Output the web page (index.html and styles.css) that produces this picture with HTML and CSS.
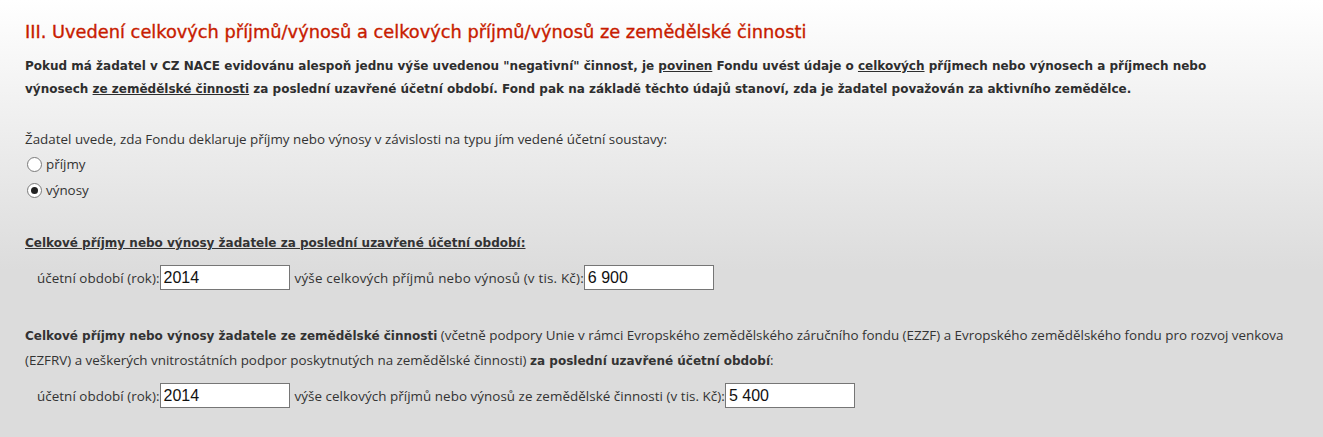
FILE: index.html
```html
<!DOCTYPE html>
<html lang="cs">
<head>
<meta charset="utf-8">
<link rel="stylesheet" href="styles.css">
</head>
<body>
<div class="page">
  <h2 class="title">III. Uvedení celkových příjmů/výnosů a celkových příjmů/výnosů ze zemědělské činnosti</h2>
  <p class="intro">Pokud má žadatel v CZ NACE evidovánu alespoň jednu výše uvedenou "negativní" činnost, je <u>povinen</u> Fondu uvést údaje o <u>celkových</u> příjmech nebo výnosech a příjmech nebo<br>výnosech <u>ze zemědělské činnosti</u> za poslední uzavřené účetní období. Fond pak na základě těchto údajů stanoví, zda je žadatel považován za aktivního zemědělce.</p>

  <p class="question">Žadatel uvede, zda Fondu deklaruje příjmy nebo výnosy v závislosti na typu jím vedené účetní soustavy:</p>
  <div class="radios">
    <label class="radio"><span class="dot"></span>příjmy</label>
    <label class="radio"><span class="dot on"></span>výnosy</label>
  </div>

  <h3 class="subhead">Celkové příjmy nebo výnosy žadatele za poslední uzavřené účetní období:</h3>
  <div class="row">
    <span class="lbl">účetní období (rok):</span><span class="field">2014</span>
    <span class="lbl gap wide">výše celkových příjmů nebo výnosů (v tis. Kč):</span><span class="field">6 900</span>
  </div>

  <p class="desc"><b>Celkové příjmy nebo výnosy žadatele ze zemědělské činnosti</b> (včetně podpory Unie v rámci Evropského zemědělského záručního fondu (EZZF) a Evropského zemědělského fondu pro rozvoj venkova<br>(EZFRV) a veškerých vnitrostátních podpor poskytnutých na zemědělské činnosti) <b>za poslední uzavřené účetní období</b>:</p>
  <div class="row">
    <span class="lbl">účetní období (rok):</span><span class="field">2014</span>
    <span class="lbl gap">výše celkových příjmů nebo výnosů ze zemědělské činnosti (v tis. Kč):</span><span class="field">5 400</span>
  </div>
</div>
</body>
</html>
```
FILE: styles.css
```css
html, body {
  margin: 0;
  padding: 0;
}
body {
  background: linear-gradient(to bottom, #ffffff 0px, #f3f3f3 90px, #dcdcdc 270px, #dcdcdc 100%);
  min-height: 437px;
  color: #333;
  font-family: "Open Sans", sans-serif;
  font-size: 13.4px;
}
.page {
  padding: 21px 25px 0 25px;
  width: 1273px;
}
.title {
  margin: 0;
  font-family: "DejaVu Sans", sans-serif;
  font-weight: normal;
  font-size: 17.8px;
  line-height: 22px;
  color: #c81c00;
  -webkit-text-stroke: 0.35px #c81c00;
}
.intro {
  margin: 12px 0 0 0;
  font-family: "DejaVu Sans", sans-serif;
  font-weight: bold;
  font-size: 12px;
  line-height: 23px;
  color: #2e2e2e;
}
.question {
  margin: 26px 0 0 0;
  line-height: 24px;
}
.radios {
  display: flex;
  flex-direction: column;
}
.radio {
  display: flex;
  align-items: center;
  height: 26px;
  padding-left: 2px;
}
.dot {
  box-sizing: border-box;
  width: 15px;
  height: 15px;
  border: 1px solid #7a7a7a;
  border-radius: 50%;
  background: #fff;
  margin-right: 4px;
  position: relative;
}
.dot.on::after {
  content: "";
  position: absolute;
  left: 3px;
  top: 3px;
  width: 7px;
  height: 7px;
  border-radius: 50%;
  background: #222;
}
.subhead {
  margin: 28px 0 0 0;
  font-family: "DejaVu Sans", sans-serif;
  font-weight: bold;
  font-size: 12px;
  line-height: 24px;
  text-decoration: underline;
}
.row {
  display: flex;
  align-items: center;
  margin-top: 10px;
  padding-left: 12px;
}
.lbl {
  letter-spacing: 0.05px;
}
.lbl.wide {
  letter-spacing: 0.2px;
}
.gap {
  margin-left: 5px;
}
.field {
  box-sizing: border-box;
  width: 130px;
  height: 25px;
  border: 1px solid #767676;
  background: #fff;
  font-family: "Liberation Sans", sans-serif;
  font-size: 16px;
  color: #111;
  padding: 2px 2px 0 3px;
  line-height: 20px;
}
.desc {
  margin: 33px 0 0 0;
  line-height: 24px;
}
.desc b {
  font-family: "DejaVu Sans", sans-serif;
  font-size: 12px;
}
```
